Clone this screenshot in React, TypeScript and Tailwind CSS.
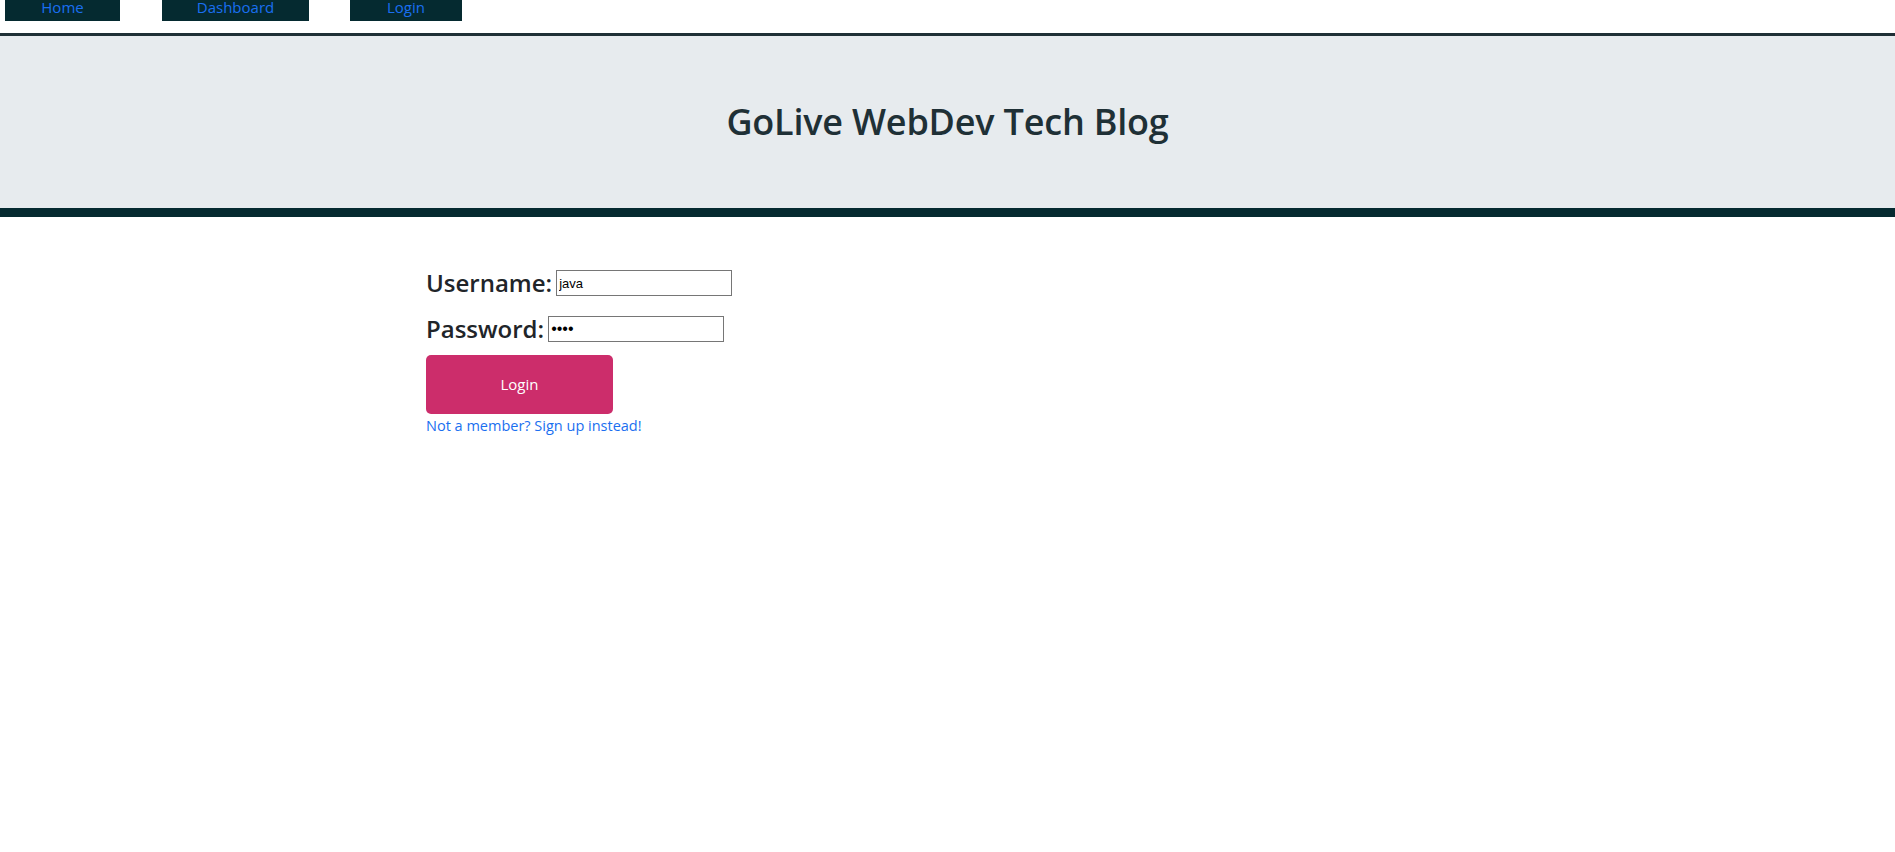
import React from 'react';

export default function App() {
  return (
    <div className="min-h-screen bg-white text-[#212529] font-['Open_Sans',sans-serif]">
      {/* Nav */}
      <nav className="flex pl-[5px] h-[33px] items-start">
        <a href="#" className="w-[115px] h-[21px] bg-[#052a30] text-[#1a6ff0] text-[15px] leading-[15px] text-center">Home</a>
        <a href="#" className="ml-[42px] w-[147px] h-[21px] bg-[#052a30] text-[#1a6ff0] text-[15px] leading-[15px] text-center">Dashboard</a>
        <a href="#" className="ml-[41px] w-[112px] h-[21px] bg-[#052a30] text-[#1a6ff0] text-[15px] leading-[15px] text-center">Login</a>
      </nav>

      {/* Header */}
      <header className="border-t-[3px] border-t-[#1f3036] border-b-[9px] border-b-[#052a30] bg-[#e7ebee] h-[184px] flex items-center justify-center">
        <h1 className="text-[36px] font-semibold text-[#1f3036] tracking-[-0.2px]">GoLive WebDev Tech Blog</h1>
      </header>

      {/* Login form */}
      <main className="pl-[426px] pt-[53px]">
        <form className="flex flex-col" onSubmit={(e) => e.preventDefault()}>
          <div className="flex items-center h-[26px]">
            <label className="text-[24px] font-semibold text-[#212529] mr-[4px]">Username:</label>
            <input
              type="text"
              defaultValue="java"
              className="w-[176px] h-[26px] border border-[#767676] px-[2px] text-[13px] font-['Liberation_Sans',sans-serif] text-black outline-none"
            />
          </div>
          <div className="flex items-center h-[26px] mt-[20px]">
            <label className="text-[24px] font-semibold text-[#212529] mr-[4px]">Password:</label>
            <input
              type="password"
              defaultValue="java"
              className="w-[176px] h-[26px] border border-[#767676] px-[2px] text-[16px] font-['Liberation_Sans',sans-serif] text-black outline-none"
            />
          </div>
          <button
            type="submit"
            className="mt-[13px] w-[187px] h-[59px] rounded-[5px] bg-[#cc2d6b] text-white text-[15px]"
          >
            Login
          </button>
          <a href="#" className="mt-[3px] text-[14.5px] text-[#1a6ff0] w-fit leading-[18px]">
            Not a member? Sign up instead!
          </a>
        </form>
      </main>
    </div>
  );
}
